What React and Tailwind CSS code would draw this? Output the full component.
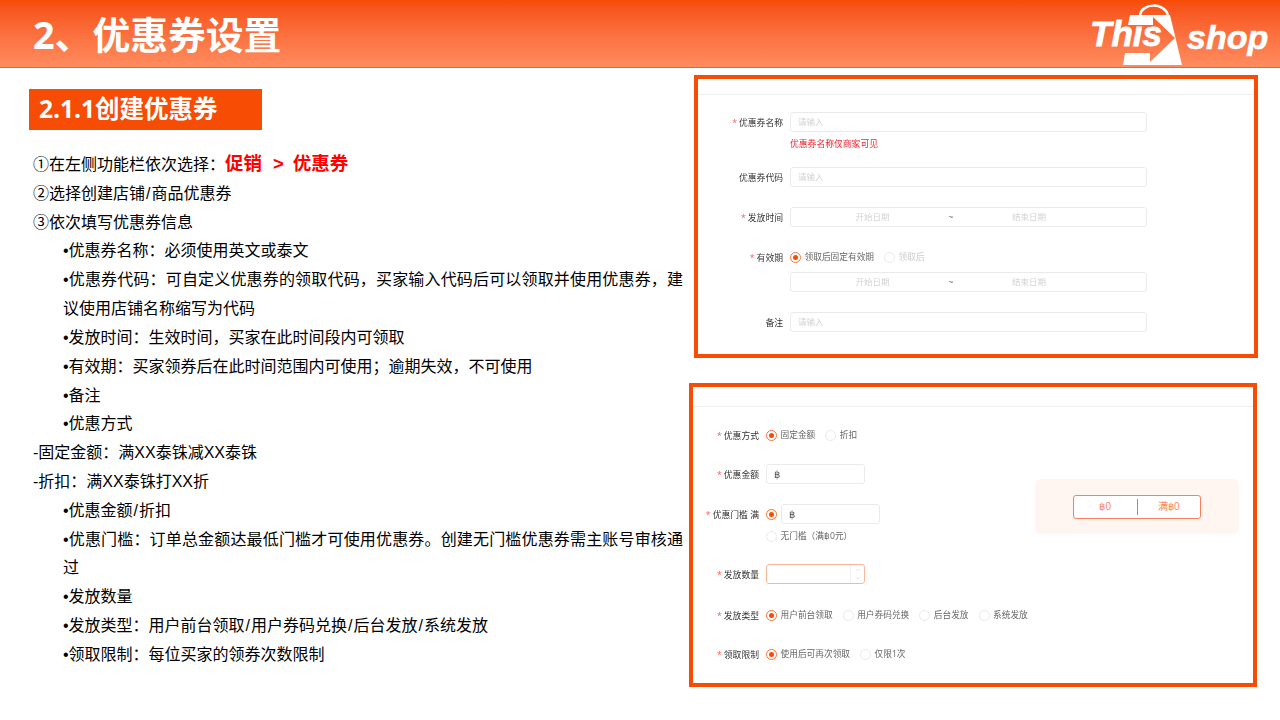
import { ChevronUp, ChevronDown } from 'lucide-react'

function Logo() {
  return (
    <div className="relative w-[180px] h-[62px] mt-[3px]">
      <svg className="absolute left-[32px] top-0" width="62" height="62" viewBox="0 0 62 62">
        <path d="M18 12 C20 0 42 -1 46 12" fill="none" stroke="#fff" strokeWidth="2.5" />
        <path d="M8 12 H48 L60 62 H1 L3 50 H28 V59 L53 35 L31 14 V22 H6 Z" fill="#fff" />
      </svg>
      <span className="absolute left-0 top-[9px] text-[35px] leading-[44px] font-bold italic text-white font-['Liberation_Sans',sans-serif] [-webkit-text-stroke:0.8px_white]">This</span>
      <span className="absolute left-[97px] top-[12px] text-[34px] leading-[44px] font-bold italic text-white font-['Liberation_Sans',sans-serif] [-webkit-text-stroke:0.6px_white]">shop</span>
    </div>
  )
}

function Line({ children, indent, wrap }) {
  return <p className={`${indent ? 'pl-[30px]' : ''} ${wrap ? 'text-justify' : ''}`}>{children}</p>
}

// the slash is wider in the picture than in Liberation Sans
function Slash() {
  return <span className="mx-[1px]">/</span>
}

function Label({ children, req, w }) {
  return (
    <div className={`${w} shrink-0 flex justify-end items-center gap-[2px] pt-[3px] text-[8.8px] text-[#333]`}>
      {req && <span className="text-[#ff5a5a]">*</span>}
      <span>{children}</span>
    </div>
  )
}

function Radio({ on, children, dim }) {
  return (
    <span className="flex items-center gap-[3.5px]">
      <span className={`w-[11px] h-[11px] rounded-full border flex items-center justify-center ${on ? 'border-[#f9703a]' : 'border-[#e8e8e8]'}`}>
        {on && <span className="w-[5px] h-[5px] rounded-full bg-[#f64c04]" />}
      </span>
      <span className={`text-[8.7px] pt-[2px] ${dim ? 'text-[#ccc]' : 'text-[#666]'}`}>{children}</span>
    </span>
  )
}

function Field({ children, className }) {
  return <div className={`border border-[#eaeaea] rounded-[3px] flex items-center pt-[1px] text-[8.5px] ${className}`}>{children}</div>
}

function Baht() {
  return <Field className="w-[99px] h-[20px] pl-[7px] text-[#555] text-[10px] font-['Liberation_Sans',sans-serif]">฿</Field>
}

function DateRange() {
  return (
    <Field className="w-[357px] h-[20px] text-[#d2d2d2]">
      <span className="w-[149px] pl-[14px] text-center">开始日期</span>
      <span className="w-[22px] text-center text-[#666]">~</span>
      <span className="w-[134px] text-center">结束日期</span>
    </Field>
  )
}

function TopForm() {
  const lw = 'w-[85px] -ml-[92px] mr-[7px]'
  return (
    <div className="w-[564px] h-[283px] border-4 border-[#f64c04] shrink-0 ml-[5px]">
      <div className="h-[16px] border-b border-[#eee]" />
      <div className="pt-[17px] pl-[92px] flex flex-col blur-[0.3px]">
        <div className="flex items-center h-[20px]">
          <Label req w={lw}>优惠券名称</Label>
          <Field className="w-[357px] h-[20px] pl-[7px] text-[#d2d2d2]">请输入</Field>
        </div>
        <p className="text-[8.8px] leading-[12px] text-[#f5222d] mt-[6px]">优惠券名称仅商家可见</p>
        <div className="flex items-center h-[20px] mt-[17px]">
          <Label w={lw}>优惠券代码</Label>
          <Field className="w-[357px] h-[20px] pl-[7px] text-[#d2d2d2]">请输入</Field>
        </div>
        <div className="flex items-center h-[20px] mt-[20px]">
          <Label req w={lw}>发放时间</Label>
          <DateRange />
        </div>
        <div className="flex items-center h-[12px] mt-[24px]">
          <Label req w={lw}>有效期</Label>
          <div className="flex gap-[10px]">
            <Radio on>领取后固定有效期</Radio>
            <Radio dim>领取后</Radio>
          </div>
        </div>
        <div className="mt-[9px]"><DateRange /></div>
        <div className="flex items-center h-[20px] mt-[20px]">
          <Label w={lw}>备注</Label>
          <Field className="w-[357px] h-[20px] pl-[7px] text-[#d2d2d2]">请输入</Field>
        </div>
      </div>
    </div>
  )
}

function BottomForm() {
  const lw = 'w-[66px] mr-[7px]'
  return (
    <div className="w-[568px] h-[304px] border-4 border-[#f64c04] shrink-0 mt-[25px]">
      <div className="h-[20px] border-b border-[#eee]" />
      <div className="flex">
        <div className="flex flex-col pt-[22px] w-[342px] blur-[0.3px]">
          <div className="flex items-center h-[12px]">
            <Label req w={lw}>优惠方式</Label>
            <div className="flex gap-[10px]">
              <Radio on>固定金额</Radio>
              <Radio>折扣</Radio>
            </div>
          </div>
          <div className="flex items-center h-[20px] mt-[23px]">
            <Label req w={lw}>优惠金额</Label>
            <Baht />
          </div>
          <div className="flex items-center h-[20px] mt-[20px]">
            <Label req w={lw}>优惠门槛 满</Label>
            <Radio on />
            <Baht />
          </div>
          <div className="ml-[73px] mt-[6px] h-[12px] flex items-center">
            <Radio>无门槛（满฿0元）</Radio>
          </div>
          <div className="flex items-center h-[20px] mt-[22px]">
            <Label req w={lw}>发放数量</Label>
            <Field className="w-[99px] h-[20px] border-[#fbb79c] justify-end !pt-0">
              <span className="w-[14px] h-full flex flex-col items-center justify-center border-l border-[#f2f2f2] text-[#ddd]">
                <ChevronUp size={8} />
                <ChevronDown size={8} />
              </span>
            </Field>
          </div>
          <div className="flex items-center h-[12px] mt-[25px]">
            <Label req w={lw}>发放类型</Label>
            <div className="flex gap-[10px]">
              <Radio on>用户前台领取</Radio>
              <Radio>用户券码兑换</Radio>
              <Radio>后台发放</Radio>
              <Radio>系统发放</Radio>
            </div>
          </div>
          <div className="flex items-center h-[12px] mt-[27px]">
            <Label req w={lw}>领取限制</Label>
            <div className="flex gap-[10px]">
              <Radio on>使用后可再次领取</Radio>
              <Radio>仅限1次</Radio>
            </div>
          </div>
        </div>
        <div className="w-[204px] h-[55px] mt-[72px] bg-[#fff5f1] rounded-[6px] flex items-center justify-center">
          <div className="w-[128px] h-[24px] border border-[#f9805a] rounded-[3px] bg-white flex items-center text-[10px] text-[#fa8560] font-['Liberation_Sans','Noto_Sans_CJK_SC',sans-serif]">
            <span className="flex-1 text-center">฿0</span>
            <span className="w-px h-[16px] bg-[#f9703a]" />
            <span className="flex-1 text-center">满฿0</span>
          </div>
        </div>
      </div>
    </div>
  )
}

export default function App() {
  return (
    <div className="w-[1280px] h-[720px] bg-white overflow-hidden font-['Open_Sans','Noto_Sans_CJK_SC',sans-serif]">
      <header className="h-[68px] bg-gradient-to-b from-[#f64c04] to-[#ff8c5e] border-b border-[#f0622a] flex items-start justify-between pl-[33px] pr-[10px]">
        <h1 className="text-[37.8px] font-bold text-white leading-none mt-[16px]">2、优惠券设置</h1>
        <Logo />
      </header>
      <div className="flex">
        <div className="w-[689px] shrink-0 pl-[29px] pt-[21px]">
          <div className="w-[233px] h-[41px] bg-[#f64c04] pl-[10px] flex items-center pb-[1px] text-[24.5px] font-bold text-white">2.1.1创建优惠券</div>
          <div className="mt-[20px] pl-[4px] w-[654px] text-[16px] leading-[28.82px] text-black font-['Liberation_Sans','Noto_Sans_CJK_SC',sans-serif]">
            <p>①在左侧功能栏依次选择：<span className="text-[18.5px] font-bold text-[#ff0000]">促销<span className="ml-[11px] mr-[9px]">&gt;</span>优惠券</span></p>
            <Line>②选择创建店铺<Slash />商品优惠券</Line>
            <Line>③依次填写优惠券信息</Line>
            <Line indent>•优惠券名称：必须使用英文或泰文</Line>
            <Line indent wrap>•优惠券代码：可自定义优惠券的领取代码，买家输入代码后可以领取并使用优惠券，建议使用店铺名称缩写为代码</Line>
            <Line indent>•发放时间：生效时间，买家在此时间段内可领取</Line>
            <Line indent>•有效期：买家领券后在此时间范围内可使用；逾期失效，不可使用</Line>
            <Line indent>•备注</Line>
            <Line indent>•优惠方式</Line>
            <Line>-固定金额：满XX泰铢减XX泰铢</Line>
            <Line>-折扣：满XX泰铢打XX折</Line>
            <Line indent>•优惠金额<Slash />折扣</Line>
            <Line indent wrap>•优惠门槛：订单总金额达最低门槛才可使用优惠券。创建无门槛优惠券需主账号审核通过</Line>
            <Line indent>•发放数量</Line>
            <Line indent>•发放类型：用户前台领取<Slash />用户券码兑换<Slash />后台发放<Slash />系统发放</Line>
            <Line indent>•领取限制：每位买家的领券次数限制</Line>
          </div>
        </div>
        <div className="pt-[7px] flex flex-col">
          <TopForm />
          <BottomForm />
        </div>
      </div>
    </div>
  )
}
